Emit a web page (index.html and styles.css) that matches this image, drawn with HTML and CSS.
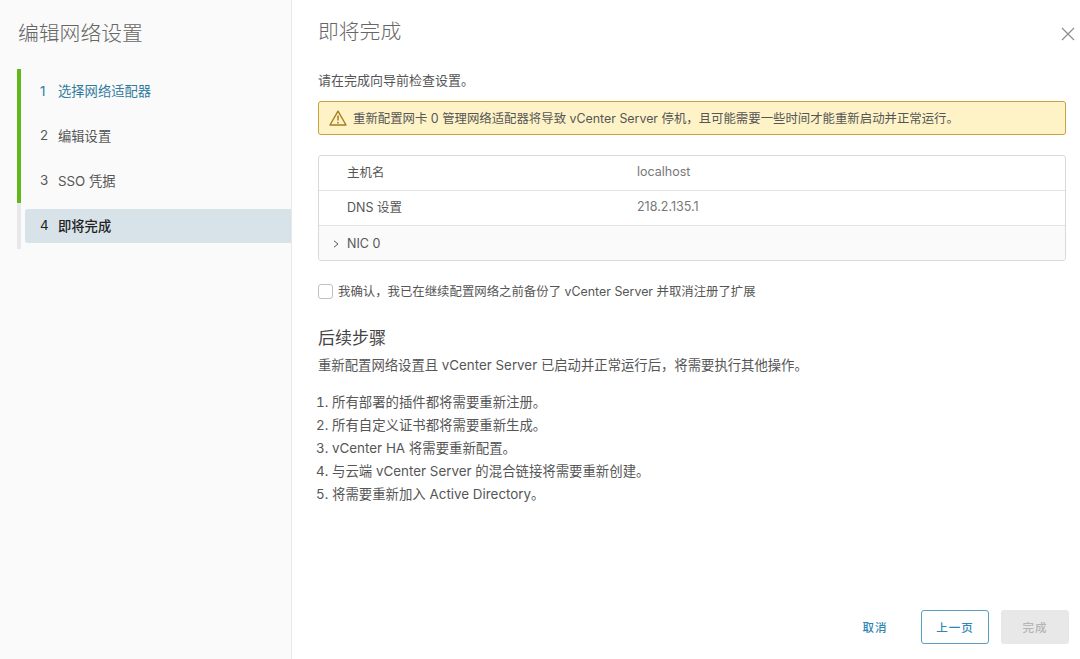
FILE: index.html
```html
<!DOCTYPE html>
<html lang="zh-CN">
<head>
    <meta charset="UTF-8">
    <meta name="viewport" content="width=device-width, initial-scale=1.0">
    <title>编辑网络设置</title>
    <link rel="stylesheet" href="styles.css">
</head>
<body>
    <div class="wizard">
        <aside class="side-nav">
            <h2 class="wizard-title">编辑网络设置</h2>
            <ol class="steps">
                <li class="step done current-link"><span class="step-num">1</span>选择网络适配器</li>
                <li class="step done"><span class="step-num">2</span>编辑设置</li>
                <li class="step done"><span class="step-num">3</span>SSO 凭据</li>
                <li class="step active"><span class="step-num">4</span><span class="step-label">即将完成</span></li>
            </ol>
        </aside>

        <main class="content">
            <header class="content-head">
                <h3 class="page-title">即将完成</h3>
                <svg class="close-icon" viewBox="0 0 14 14" width="14" height="14">
                    <path d="M1 1L13 13M13 1L1 13" stroke="#8c8c8c" stroke-width="1.2" fill="none"/>
                </svg>
            </header>

            <p class="intro">请在完成向导前检查设置。</p>

            <div class="alert">
                <svg class="alert-icon" viewBox="0 0 18 16" width="18" height="16">
                    <path d="M9 1.2L17 15H1Z" stroke="#a67c1c" stroke-width="1.4" stroke-linejoin="round" fill="none"/>
                    <path d="M9 5.6V10.6" stroke="#a67c1c" stroke-width="1.5"/>
                    <circle cx="9" cy="12.7" r="0.9" fill="#a67c1c"/>
                </svg>
                <span>重新配置网卡 0 管理网络适配器将导致 vCenter Server 停机，且可能需要一些时间才能重新启动并正常运行。</span>
            </div>

            <div class="summary">
                <div class="row">
                    <span class="row-name">主机名</span>
                    <span class="row-value">localhost</span>
                </div>
                <div class="row">
                    <span class="row-name">DNS 设置</span>
                    <span class="row-value">218.2.135.1</span>
                </div>
                <div class="row row-expand">
                    <svg class="chevron" viewBox="0 0 6 8" width="6" height="8">
                        <path d="M1 0.8L5 4L1 7.2" stroke="#555" stroke-width="1" fill="none"/>
                    </svg>
                    <span>NIC 0</span>
                </div>
            </div>

            <label class="confirm">
                <span class="checkbox"></span>
                <span>我确认，我已在继续配置网络之前备份了 vCenter Server 并取消注册了扩展</span>
            </label>

            <h4 class="next-title">后续步骤</h4>
            <p class="next-intro">重新配置网络设置且 vCenter Server 已启动并正常运行后，将需要执行其他操作。</p>

            <ol class="next-list">
                <li>所有部署的插件都将需要重新注册。</li>
                <li>所有自定义证书都将需要重新生成。</li>
                <li>vCenter HA 将需要重新配置。</li>
                <li>与云端 vCenter Server 的混合链接将需要重新创建。</li>
                <li>将需要重新加入 Active Directory。</li>
            </ol>

            <footer class="actions">
                <button class="btn btn-link">取消</button>
                <button class="btn btn-outline">上一页</button>
                <button class="btn btn-disabled">完成</button>
            </footer>
        </main>
    </div>
</body>
</html>
```

FILE: styles.css
```css
* {
    box-sizing: border-box;
}

body {
    margin: 0;
    height: 659px;
    overflow: hidden;
    background: #fff;
    color: #565656;
    font-family: "Inter", "Noto Sans CJK SC", sans-serif;
    font-size: 12.7px;
}

.wizard {
    display: flex;
    height: 659px;
}

.side-nav {
    width: 292px;
    flex-shrink: 0;
    background: #fafafa;
    border-right: 1px solid #e8e8e8;
    padding: 22px 0 0 17px;
}

.wizard-title {
    margin: 0 0 23px 1px;
    font-size: 20.8px;
    font-weight: 300;
    line-height: 24px;
    color: #666;
}

.steps {
    margin: 0;
    padding: 0 0 6px;
    list-style: none;
    border-left: 4px solid #e8e8e8;
    width: 274px;
    font-size: 13.3px;
}

.step {
    display: flex;
    align-items: center;
    height: 44.67px;
    padding: 0 0 1px 19px;
    color: #565656;
}

.done {
    border-left: 4px solid #62b71a;
    margin-left: -4px;
}

.current-link {
    color: #2f7b9f;
}

.step-num {
    width: 18px;
}

.active {
    margin: 6px 0 0 4px;
    height: 34px;
    padding-left: 15px;
    background: #d8e3e9;
    border-radius: 3px 0 0 3px;
    color: #222;
}

.step-label {
    font-weight: 500;
}

.content {
    flex: 1;
    position: relative;
    padding: 0 14px 0 26px;
}

.content-head {
    display: flex;
    justify-content: space-between;
    height: 70px;
    padding-top: 19px;
}

.page-title {
    margin: 0;
    font-size: 20.8px;
    font-weight: 300;
    line-height: 26px;
    color: #666;
}

.close-icon {
    margin-top: 8px;
    margin-right: -9px;
}

.intro {
    margin: 0 0 11px;
    font-size: 13px;
    line-height: 20px;
}

.alert {
    display: flex;
    align-items: center;
    gap: 6px;
    height: 34px;
    padding-left: 10px;
    background: #fef3c6;
    border: 1px solid #c9a143;
    border-radius: 3px;
    color: #565656;
    font-size: 12.4px;
}

.summary {
    margin-top: 20px;
    height: 106px;
    border: 1px solid #d9d9d9;
    border-radius: 3px;
    overflow: hidden;
    font-size: 12.5px;
}

.row {
    display: flex;
    align-items: center;
    height: 35px;
    padding: 0 0 3px 28px;
    border-bottom: 1px solid #e3e3e3;
}

.row-name {
    width: 290px;
}

.row-value {
    color: #787878;
}

.row-expand {
    height: 35px;
    padding: 0 0 0 14px;
    gap: 8px;
    background: #fafafa;
    border-bottom: none;
}

.confirm {
    display: flex;
    align-items: center;
    gap: 5px;
    margin-top: 22px;
    height: 16px;
    font-size: 12.4px;
}

.checkbox {
    width: 15px;
    height: 15px;
    border: 1px solid #c0c0c0;
    border-radius: 3px;
    background: #fff;
}

.next-title {
    margin: 28px 0 0;
    font-size: 17px;
    font-weight: 400;
    line-height: 22px;
    color: #444;
}

.next-intro {
    margin: 6px 0 0;
    font-size: 13.35px;
    line-height: 20px;
}

.next-list {
    margin: 16px 0 0;
    padding: 0 0 0 14px;
    font-size: 13.4px;
}

.next-list li {
    line-height: 23px;
}

.actions {
    position: absolute;
    right: 11px;
    top: 610px;
    display: flex;
    align-items: center;
    gap: 12px;
}

.btn {
    height: 33.5px;
    width: 68px;
    border-radius: 3px;
    font-family: inherit;
    font-size: 11.5px;
    font-weight: 500;
    letter-spacing: 1px;
    background: none;
    border: 1px solid transparent;
}

.btn-link {
    color: #2f86b3;
}

.btn-outline {
    color: #2f86b3;
    border-color: #5a9fc2;
}

.btn-disabled {
    background: #e8e8e8;
    color: #b5b5b5;
}
```
